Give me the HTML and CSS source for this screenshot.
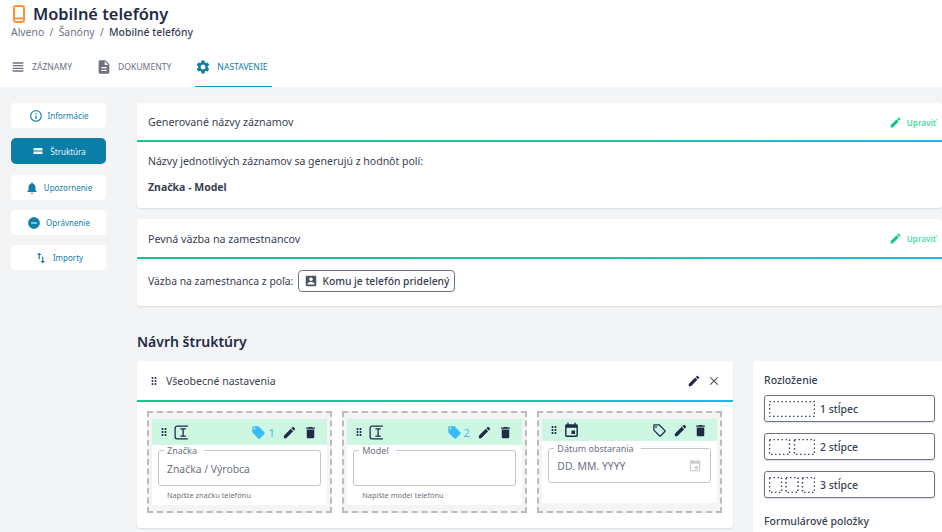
FILE: index.html
```html
<!DOCTYPE html>
<html lang="sk">
<head>
<meta charset="utf-8">
<title>Mobilné telefóny</title>
<link rel="stylesheet" href="styles.css">
</head>
<body>
<svg class="defs" width="0" height="0" aria-hidden="true">
  <symbol id="i-lines" viewBox="0 0 24 24"><path d="M4 15h16v-2H4v2zm0 4h16v-2H4v2zm0-8h16V9H4v2zm0-6v2h16V5H4z"/></symbol>
  <symbol id="i-doc" viewBox="0 0 24 24"><path d="M14 2H6c-1.1 0-1.99.9-1.99 2L4 20c0 1.1.89 2 1.99 2H18c1.1 0 2-.9 2-2V8l-6-6zm2 16H8v-2h8v2zm0-4H8v-2h8v2zm-3-5V3.5L18.5 9H13z"/></symbol>
  <symbol id="i-gear" viewBox="0 0 24 24"><path d="M19.14 12.94c.04-.3.06-.61.06-.94 0-.32-.02-.64-.07-.94l2.03-1.58c.18-.14.23-.41.12-.61l-1.92-3.32c-.12-.22-.37-.29-.59-.22l-2.39.96c-.5-.38-1.03-.7-1.62-.94l-.36-2.54c-.04-.24-.24-.41-.48-.41h-3.84c-.24 0-.43.17-.47.41l-.36 2.54c-.59.24-1.13.57-1.62.94l-2.39-.96c-.22-.08-.47 0-.59.22L2.74 8.87c-.12.21-.08.47.12.61l2.03 1.58c-.05.3-.09.63-.09.94s.02.64.07.94l-2.03 1.58c-.18.14-.23.41-.12.61l1.92 3.32c.12.22.37.29.59.22l2.39-.96c.5.38 1.03.7 1.62.94l.36 2.54c.05.24.24.41.48.41h3.84c.24 0 .44-.17.47-.41l.36-2.54c.59-.24 1.13-.56 1.62-.94l2.39.96c.22.08.47 0 .59-.22l1.92-3.32c.12-.22.07-.47-.12-.61l-2.01-1.58zM12 15.6c-1.98 0-3.6-1.62-3.6-3.6s1.62-3.6 3.6-3.6 3.6 1.62 3.6 3.6-1.62 3.6-3.6 3.6z"/></symbol>
  <symbol id="i-info" viewBox="0 0 24 24"><path d="M11 7h2v2h-2zm0 4h2v6h-2zm1-9C6.48 2 2 6.48 2 12s4.48 10 10 10 10-4.48 10-10S17.52 2 12 2zm0 18c-4.41 0-8-3.59-8-8s3.59-8 8-8 8 3.59 8 8-3.59 8-8 8z"/></symbol>
  <symbol id="i-agenda" viewBox="0 0 24 24"><path d="M4.3 6.8h15.4v4.4H4.3zM4.3 12.8h15.4v4.4H4.3z"/></symbol>
  <symbol id="i-bell" viewBox="0 0 24 24"><path d="M12 22c1.1 0 2-.9 2-2h-4c0 1.1.89 2 2 2zm6-6v-5c0-3.07-1.64-5.64-4.5-6.32V4c0-.83-.67-1.5-1.5-1.5s-1.5.67-1.5 1.5v.68C7.63 5.36 6 7.92 6 11v5l-2 2v1h16v-1l-2-2z"/></symbol>
  <symbol id="i-minus" viewBox="0 0 24 24"><path d="M12 2C6.48 2 2 6.48 2 12s4.48 10 10 10 10-4.48 10-10S17.52 2 12 2zm5 11H7v-2h10v2z"/></symbol>
  <symbol id="i-swap" viewBox="0 0 24 24"><path d="M9 3L5 6.99h3V14h2V6.99h3L9 3zm7 14.01V10h-2v7.01h-3L15 21l4-3.99h-3z"/></symbol>
  <symbol id="i-edit" viewBox="0 0 24 24"><path d="M3 17.25V21h3.75L17.81 9.94l-3.75-3.75L3 17.25zM20.71 7.04c.39-.39.39-1.02 0-1.41l-2.34-2.34c-.39-.39-1.02-.39-1.41 0l-1.83 1.83 3.75 3.75 1.83-1.83z"/></symbol>
  <symbol id="i-close" viewBox="0 0 24 24"><path d="M19 6.41L17.59 5 12 10.59 6.41 5 5 6.41 10.59 12 5 17.59 6.41 19 12 13.41 17.59 19 19 17.59 13.41 12z"/></symbol>
  <symbol id="i-drag" viewBox="0 0 24 24"><path d="M11 18c0 1.1-.9 2-2 2s-2-.9-2-2 .9-2 2-2 2 .9 2 2zm-2-8c-1.1 0-2 .9-2 2s.9 2 2 2 2-.9 2-2-.9-2-2-2zm0-6c-1.1 0-2 .9-2 2s.9 2 2 2 2-.9 2-2-.9-2-2-2zm6 4c1.1 0 2-.9 2-2s-.9-2-2-2-2 .9-2 2 .9 2 2 2zm0 2c-1.1 0-2 .9-2 2s.9 2 2 2 2-.9 2-2-.9-2-2-2zm0 6c-1.1 0-2 .9-2 2s.9 2 2 2 2-.9 2-2-.9-2-2-2z"/></symbol>
  <symbol id="i-trash" viewBox="0 0 24 24"><path d="M6 19c0 1.1.9 2 2 2h8c1.1 0 2-.9 2-2V7H6v12zM19 4h-3.5l-1-1h-5l-1 1H5v2h14V4z"/></symbol>
  <symbol id="i-tag" viewBox="0 0 24 24"><path d="M21.41 11.58l-9-9C12.05 2.22 11.55 2 11 2H4c-1.1 0-2 .9-2 2v7c0 .55.22 1.05.59 1.42l9 9c.36.36.86.58 1.41.58.55 0 1.05-.22 1.41-.59l7-7c.37-.36.59-.86.59-1.41 0-.55-.23-1.06-.59-1.42zM5.5 7C4.67 7 4 6.33 4 5.5S4.67 4 5.5 4 7 4.67 7 5.5 6.33 7 5.5 7z"/></symbol>
  <symbol id="i-tag-o" viewBox="0 0 24 24"><path d="M21.41 11.58l-9-9C12.05 2.22 11.55 2 11 2H4c-1.1 0-2 .9-2 2v7c0 .55.22 1.05.59 1.42l9 9c.36.36.86.58 1.41.58s1.05-.22 1.41-.59l7-7c.37-.36.59-.86.59-1.41s-.23-1.06-.59-1.42zM13 20.01L4 11V4h7v-.01l9 9-7 7.02z"/><circle cx="6.5" cy="6.5" r="1.5"/></symbol>
  <symbol id="i-event" viewBox="0 0 24 24"><path d="M17 12h-5v5h5v-5zM16 1v2H8V1H6v2H5c-1.11 0-1.99.9-1.99 2L3 19c0 1.1.89 2 2 2h14c1.1 0 2-.9 2-2V5c0-1.1-.9-2-2-2h-1V1h-2zm3 18H5V8h14v11z"/></symbol>
  <symbol id="i-person" viewBox="0 0 24 24"><path d="M3 5v14c0 1.1.89 2 2 2h14c1.1 0 2-.9 2-2V5c0-1.1-.9-2-2-2H5c-1.11 0-2 .9-2 2zm12 4c0 1.66-1.34 3-3 3s-3-1.34-3-3 1.34-3 3-3 3 1.34 3 3zm-9 8c0-2 4-3.1 6-3.1s6 1.1 6 3.1v1H6v-1z"/></symbol>
  <symbol id="i-text" viewBox="0 0 16 16"><path d="M14 2H4a2 2 0 0 0-2 2v8a2 2 0 0 0 2 2h10M7 4.5h5M7 11.5h5M9.5 4.5v7" fill="none" stroke="currentColor" stroke-width="1.2"/></symbol>
  <symbol id="g-1" viewBox="0 0 46 16"><rect x=".5" y=".5" width="45" height="15" class="dots"/></symbol>
  <symbol id="g-2" viewBox="0 0 46 16"><rect x=".5" y=".5" width="20" height="15" class="dots"/><rect x="25.5" y=".5" width="20" height="15" class="dots"/></symbol>
  <symbol id="g-3" viewBox="0 0 46 16"><rect x=".5" y=".5" width="12" height="15" class="dots"/><rect x="17" y=".5" width="12" height="15" class="dots"/><rect x="33.5" y=".5" width="12" height="15" class="dots"/></symbol>
</svg>

<header class="top">
  <div class="title-row">
    <svg class="phone" viewBox="0 0 12 18"><rect x="1" y="1" width="10" height="16" rx="2" fill="none" stroke="#fb923c" stroke-width="2"/><path d="M1 13.5h10" stroke="#fb923c" stroke-width="2"/></svg>
    <h1>Mobilné telefóny</h1>
  </div>
  <div class="crumbs"><span>Alveno</span><span class="sep">/</span><span>Šanóny</span><span class="sep">/</span><b>Mobilné telefóny</b></div>
  <nav class="tabs">
    <a class="tab"><svg><use href="#i-lines"/></svg>ZÁZNAMY</a>
    <a class="tab"><svg><use href="#i-doc"/></svg>DOKUMENTY</a>
    <a class="tab active"><svg><use href="#i-gear"/></svg>NASTAVENIE</a>
  </nav>
</header>

<div class="page">
  <aside class="side">
    <a class="side-btn"><svg class="ic14"><use href="#i-info"/></svg>Informácie</a>
    <a class="side-btn on"><svg class="ic14"><use href="#i-agenda"/></svg>Štruktúra</a>
    <a class="side-btn"><svg class="ic14"><use href="#i-bell"/></svg>Upozornenie</a>
    <a class="side-btn"><svg class="ic14"><use href="#i-minus"/></svg>Oprávnenie</a>
    <a class="side-btn"><svg class="ic14"><use href="#i-swap"/></svg>Importy</a>
  </aside>

  <main class="content">
    <section class="card">
      <div class="card-head short-head"><span>Generované názvy záznamov</span><a class="edit"><svg class="ic13"><use href="#i-edit"/></svg>Upraviť</a></div>
      <div class="rule"></div>
      <div class="card-body first">
        <p>Názvy jednotlivých záznamov sa generujú z hodnôt polí:</p>
        <p class="strong">Značka - Model</p>
      </div>
    </section>

    <section class="card">
      <div class="card-head"><span>Pevná väzba na zamestnancov</span><a class="edit"><svg class="ic13"><use href="#i-edit"/></svg>Upraviť</a></div>
      <div class="rule"></div>
      <div class="card-body bind">
        <span>Väzba na zamestnanca z poľa:</span>
        <span class="pill"><svg class="ic14"><use href="#i-person"/></svg>Komu je telefón pridelený</span>
      </div>
    </section>

    <h2>Návrh štruktúry</h2>

    <div class="design">
      <section class="card form">
        <div class="card-head form-head">
          <svg class="ic12"><use href="#i-drag"/></svg><span class="grow">Všeobecné nastavenia</span>
          <svg class="ic14 dark"><use href="#i-edit"/></svg><svg class="ic14 gray"><use href="#i-close"/></svg>
        </div>
        <div class="rule"></div>
        <div class="cols">
          <div class="col">
            <div class="cell">
              <div class="bar">
                <svg class="ic12"><use href="#i-drag"/></svg><svg class="ic-t"><use href="#i-text"/></svg>
                <span class="grow"></span>
                <svg class="ic15 sky"><use href="#i-tag"/></svg><span class="num">1</span>
                <svg class="ic15"><use href="#i-edit"/></svg><svg class="ic15"><use href="#i-trash"/></svg>
              </div>
              <fieldset class="field"><legend>Značka</legend>Značka / Výrobca</fieldset>
              <p class="hint">Napíšte značku telefónu</p>
            </div>
          </div>
          <div class="col">
            <div class="cell">
              <div class="bar">
                <svg class="ic12"><use href="#i-drag"/></svg><svg class="ic-t"><use href="#i-text"/></svg>
                <span class="grow"></span>
                <svg class="ic15 sky"><use href="#i-tag"/></svg><span class="num">2</span>
                <svg class="ic15"><use href="#i-edit"/></svg><svg class="ic15"><use href="#i-trash"/></svg>
              </div>
              <fieldset class="field"><legend>Model</legend></fieldset>
              <p class="hint">Napíšte model telefónu</p>
            </div>
          </div>
          <div class="col">
            <div class="cell short-cell">
              <div class="bar short">
                <svg class="ic12"><use href="#i-drag"/></svg><svg class="ic-t"><use href="#i-event"/></svg>
                <span class="grow"></span>
                <svg class="ic15"><use href="#i-tag-o"/></svg>
                <svg class="ic15"><use href="#i-edit"/></svg><svg class="ic15"><use href="#i-trash"/></svg>
              </div>
              <fieldset class="field date"><legend>Dátum obstarania</legend><span class="grow">DD. MM. YYYY</span><svg class="ic14 light"><use href="#i-event"/></svg></fieldset>
            </div>
          </div>
        </div>
      </section>

      <section class="card panel">
        <h3>Rozloženie</h3>
        <div class="layout-btn"><svg class="grid-ic"><use href="#g-1"/></svg>1 stĺpec</div>
        <div class="layout-btn"><svg class="grid-ic"><use href="#g-2"/></svg>2 stĺpce</div>
        <div class="layout-btn"><svg class="grid-ic"><use href="#g-3"/></svg>3 stĺpce</div>
        <h3 class="next">Formulárové položky</h3>
      </section>
    </div>
  </main>
</div>
</body>
</html>
```

FILE: styles.css
```css
* { box-sizing: border-box; }
html, body { margin: 0; height: 100%; }
body {
  width: 942px;
  height: 532px;
  overflow: hidden;
  background: #f3f4f6;
  color: #374151;
  font-family: "Noto Sans", "Open Sans", sans-serif;
  font-size: 10.4px;
}
.defs { position: absolute; }
svg { fill: currentColor; flex: none; display: block; }
.ic12 { width: 12px; height: 12px; }
.ic13 { width: 13px; height: 13px; }
.ic14 { width: 14px; height: 14px; }
.ic15 { width: 15px; height: 15px; }
.ic-t { width: 17px; height: 17px; }
.grow { flex: 1; }

/* header */
.top { background: #fff; height: 87px; padding-top: 4px; }
.title-row { display: flex; align-items: center; gap: 8px; padding-left: 13px; height: 20px; }
.phone { width: 12px; height: 18px; }
h1 { margin: 0; font-size: 16.4px; line-height: 20px; font-weight: 600; color: #1f2b46; }
.crumbs { display: flex; gap: 5.3px; padding-left: 11px; margin-top: 1px; line-height: 14px; color: #6b7280; }
.crumbs b { font-weight: 500; color: #374151; }
.tabs { display: flex; margin-top: 12px; padding-left: 10px; height: 36px; }
.tab { display: flex; align-items: center; gap: 6px; height: 36px; padding-bottom: 4px; margin-right: 24px; font-size: 8.6px; color: #6b7280; }
.tab svg { width: 16px; height: 16px; }
.tab.active { color: #0e7ea8; border-bottom: 1px solid #1c98c4; padding-right: 4px; }

/* layout */
.page { display: flex; align-items: flex-start; padding: 16px 0 0 11px; }
.side { width: 95px; margin-right: 31px; display: flex; flex-direction: column; gap: 10px; }
.side-btn {
  display: flex; align-items: center; justify-content: center; gap: 5px;
  height: 25px; border-radius: 4px; background: #fff;
  font-size: 8px; color: #0f7ea8;
}
.side-btn.on { background: #0a7ea6; color: #e8f6fb; border-radius: 5px; height: 26px; margin-bottom: 1px; }
.content { width: 805px; display: flex; flex-direction: column; }

/* cards */
.card { background: #fff; border-radius: 3px; box-shadow: 0 1px 2px rgba(0,0,0,.1); margin-bottom: 11px; }
.card-head { display: flex; align-items: center; justify-content: space-between; height: 38px; padding: 1px 6px 0 11px; font-size: 10.7px; color: #374151; }
.short-head { height: 37px; }
.rule { height: 2px; background: linear-gradient(90deg, #10c98f 0%, #10c9a5 60%, #12bdf0 100%); }
.edit { display: flex; align-items: center; gap: 5px; font-size: 8.1px; color: #4ade9f; font-weight: 600; }
.edit svg { color: #10c77f; }
.card-body { padding: 0 11px; }
.card-body p { margin: 0; }
.first { height: 66px; padding-top: 12px; font-size: 10.5px; }
.strong { margin-top: 12px !important; font-weight: 700; }
.bind { display: flex; align-items: center; gap: 5px; height: 47px; padding-bottom: 3px; }
.pill { display: flex; align-items: center; gap: 4px; height: 22px; padding: 0 5px 0 5px; border: 1px solid #6b7588; border-radius: 4px; font-size: 10.3px; font-weight: 500; }
.pill svg { color: #4b5563; }
h2 { margin: 15px 0 9px; font-size: 14px; line-height: 20px; font-weight: 600; color: #1f2b46; }

/* designer */
.design { display: flex; gap: 20px; }
.form { width: 596px; flex: none; margin: 0; height: 167px; }
.form-head { justify-content: flex-start; gap: 6px; height: 39px; padding: 0 12px 0 11px; font-size: 10.5px; }
.form-head .dark { color: #1f2b46; }
.form-head .gray { color: #4b5563; }
.cols { display: flex; gap: 10.5px; padding: 9px 11px 0 10px; }
.col { flex: 1; height: 102px; border: 2px dashed #bcbcbc; background: #f3f4f4; padding: 6px 3px 0; }
.cell { background: #fff; height: 86px; }
.short-cell { height: 84px; }
.bar { display: flex; align-items: center; gap: 5.5px; height: 26px; padding: 0 9px 0 6px; background: #cdf6e3; color: #1f2b46; }
.bar.short { height: 22px; }
.bar .ic12 { margin-right: -2.5px; }
.bar .sky { margin-right: -3.5px; color: #38bdf8; }
.num { color: #38bdf8; font-size: 11px; margin-right: 2px; }
.field {
  display: flex; align-items: center;
  margin: 1px 6px 0; padding: 0 8px 3px; height: 40px;
  border: 1px solid #c4c6ca; border-radius: 3px;
  font-size: 10.4px; color: #6b7280;
}
.field legend { padding: 0 7px 0 3px; margin-left: -3px; font-size: 9px; line-height: 9px; color: #6b7280; }
.field.date { height: 39px; margin-top: 3px; padding-bottom: 4px; }
.light { color: #c9ccd1; }
.hint { margin: 5px 0 0 15px; font-size: 7.4px; line-height: 9px; color: #6b7280; }

/* right panel */
.panel { width: 200px; flex: none; margin: 0; height: 180px; padding: 12px 11px 0; }
h3 { margin: 0; font-size: 10.5px; line-height: 14px; font-weight: 500; color: #374151; }
.next { margin-top: 16px; }
.layout-btn {
  display: flex; align-items: center; gap: 5px;
  width: 171px; height: 27px; margin-top: 11px; padding-left: 4px;
  border: 1px solid #6b7588; border-radius: 3px;
  box-shadow: 0 1px 2px rgba(0,0,0,.15);
  font-size: 10.4px; font-weight: 500;
}
h3 + .layout-btn { margin-top: 8px; }
.grid-ic { width: 46px; height: 16px; }
.dots { fill: none; stroke: #3b4660; stroke-width: 1.5; stroke-dasharray: 1.5 2.5; }
```
